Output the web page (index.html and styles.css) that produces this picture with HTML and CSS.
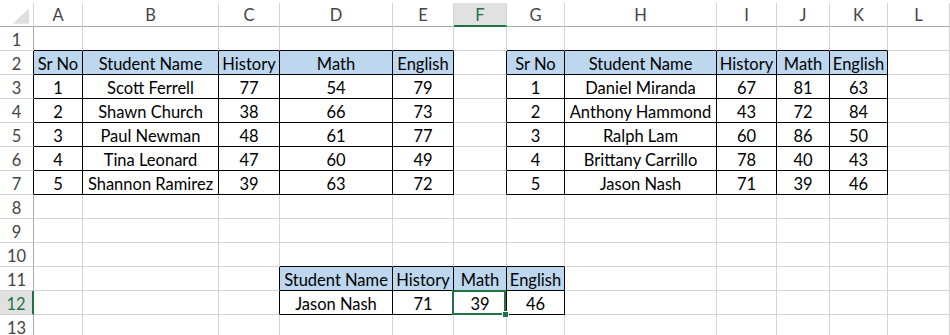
FILE: index.html
```html
<!DOCTYPE html>
<html>
<head>
<meta charset="utf-8">
<link rel="stylesheet" href="styles.css">
</head>
<body>
<div class="sheet">
  <div class="corner"><svg class="tri" width="34" height="24" viewBox="0 0 34 24"><polygon points="13,21 30,21 30,5" fill="#dfdfdf"/></svg></div>
  <div class="ch">A</div><div class="ch">B</div><div class="ch">C</div><div class="ch">D</div><div class="ch">E</div><div class="ch chs">F</div><div class="ch">G</div><div class="ch">H</div><div class="ch">I</div><div class="ch">J</div><div class="ch">K</div><div class="ch">L</div>

  <div class="rh">1</div><div class="c bb"></div><div class="c bb"></div><div class="c bb"></div><div class="c bb"></div><div class="c bb"></div><div class="c"></div><div class="c bb"></div><div class="c bb"></div><div class="c bb"></div><div class="c bb"></div><div class="c bb"></div><div class="c"></div>

  <div class="rh br">2</div><div class="c k h">Sr No</div><div class="c k h">Student Name</div><div class="c k h">History</div><div class="c k h">Math</div><div class="c k h">English</div><div class="c br"></div><div class="c k h">Sr No</div><div class="c k h">Student Name</div><div class="c k h">History</div><div class="c k h">Math</div><div class="c k h">English</div><div class="c"></div>

  <div class="rh br">3</div><div class="c k">1</div><div class="c k">Scott Ferrell</div><div class="c k">77</div><div class="c k">54</div><div class="c k">79</div><div class="c br"></div><div class="c k">1</div><div class="c k">Daniel Miranda</div><div class="c k">67</div><div class="c k">81</div><div class="c k">63</div><div class="c"></div>

  <div class="rh br">4</div><div class="c k">2</div><div class="c k">Shawn Church</div><div class="c k">38</div><div class="c k">66</div><div class="c k">73</div><div class="c br"></div><div class="c k">2</div><div class="c k">Anthony Hammond</div><div class="c k">43</div><div class="c k">72</div><div class="c k">84</div><div class="c"></div>

  <div class="rh br">5</div><div class="c k">3</div><div class="c k">Paul Newman</div><div class="c k">48</div><div class="c k">61</div><div class="c k">77</div><div class="c br"></div><div class="c k">3</div><div class="c k">Ralph Lam</div><div class="c k">60</div><div class="c k">86</div><div class="c k">50</div><div class="c"></div>

  <div class="rh br">6</div><div class="c k">4</div><div class="c k">Tina Leonard</div><div class="c k">47</div><div class="c k">60</div><div class="c k">49</div><div class="c br"></div><div class="c k">4</div><div class="c k">Brittany Carrillo</div><div class="c k">78</div><div class="c k">40</div><div class="c k">43</div><div class="c"></div>

  <div class="rh br">7</div><div class="c k">5</div><div class="c k">Shannon Ramirez</div><div class="c k">39</div><div class="c k">63</div><div class="c k">72</div><div class="c br"></div><div class="c k">5</div><div class="c k">Jason Nash</div><div class="c k">71</div><div class="c k">39</div><div class="c k">46</div><div class="c"></div>

  <div class="rh">8</div><div class="c"></div><div class="c"></div><div class="c"></div><div class="c"></div><div class="c"></div><div class="c"></div><div class="c"></div><div class="c"></div><div class="c"></div><div class="c"></div><div class="c"></div><div class="c"></div>

  <div class="rh">9</div><div class="c"></div><div class="c"></div><div class="c"></div><div class="c"></div><div class="c"></div><div class="c"></div><div class="c"></div><div class="c"></div><div class="c"></div><div class="c"></div><div class="c"></div><div class="c"></div>

  <div class="rh">10</div><div class="c"></div><div class="c"></div><div class="c"></div><div class="c bb"></div><div class="c bb"></div><div class="c bb"></div><div class="c bb"></div><div class="c"></div><div class="c"></div><div class="c"></div><div class="c"></div><div class="c"></div>

  <div class="rh">11</div><div class="c"></div><div class="c"></div><div class="c br"></div><div class="c k h">Student Name</div><div class="c k h">History</div><div class="c k h">Math</div><div class="c k h">English</div><div class="c"></div><div class="c"></div><div class="c"></div><div class="c"></div><div class="c"></div>

  <div class="rh rhs">12</div><div class="c"></div><div class="c"></div><div class="c br"></div><div class="c k">Jason Nash</div><div class="c k">71</div><div class="c k sel">39</div><div class="c k">46</div><div class="c"></div><div class="c"></div><div class="c"></div><div class="c"></div><div class="c"></div>

  <div class="rh">13</div><div class="c"></div><div class="c"></div><div class="c"></div><div class="c"></div><div class="c"></div><div class="c"></div><div class="c"></div><div class="c"></div><div class="c"></div><div class="c"></div><div class="c"></div><div class="c"></div>
</div>
</body>
</html>
```

FILE: styles.css
```css
html, body {
  margin: 0;
  padding: 0;
  background: #ffffff;
  overflow: hidden;
}

.sheet {
  display: grid;
  grid-template-columns: 34px 49px 136px 61px 113px 61px 53px 58px 152px 60px 53px 58px 62px;
  grid-auto-rows: 24px;
  padding-top: 3px;
  width: 950px;
  font-family: Lato, "Liberation Sans", sans-serif;
  font-size: 16.5px;
  color: #000;
}

.sheet > div {
  box-sizing: border-box;
  border-right: 1px solid #d4d4d4;
  border-bottom: 1px solid #d4d4d4;
  display: flex;
  align-items: center;
  justify-content: center;
  white-space: nowrap;
  overflow: visible;
}

.corner {
  position: relative;
  border-bottom-color: #ababab !important;
}

.tri {
  display: block;
}

.ch {
  color: #444;
  border-bottom-color: #ababab !important;
  padding-top: 1px;
}

.chs {
  background: #e1e1e1;
  color: #217346;
  border-bottom: 2px solid #217346 !important;
}

.rh {
  color: #444;
  border-right-color: #ababab !important;
  padding-top: 2px;
}

.rhs {
  background: #e1e1e1;
  color: #217346;
  border-right: 2px solid #217346 !important;
}

.c {
  padding-top: 2px;
}

.k {
  border-right-color: #000 !important;
  border-bottom-color: #000 !important;
}

.bb {
  border-bottom-color: #000 !important;
}

.br {
  border-right-color: #000 !important;
}

.h {
  background: #bdd7ee;
}

.sel {
  position: relative;
}

.sel::before {
  content: "";
  position: absolute;
  left: -2px;
  top: -1px;
  right: 0;
  bottom: -1px;
  border: 2px solid #217346;
  z-index: 2;
}

.sel::after {
  content: "";
  position: absolute;
  width: 5px;
  height: 5px;
  right: -3px;
  bottom: -4px;
  background: #217346;
  border: 1px solid #fff;
  z-index: 3;
}
```
